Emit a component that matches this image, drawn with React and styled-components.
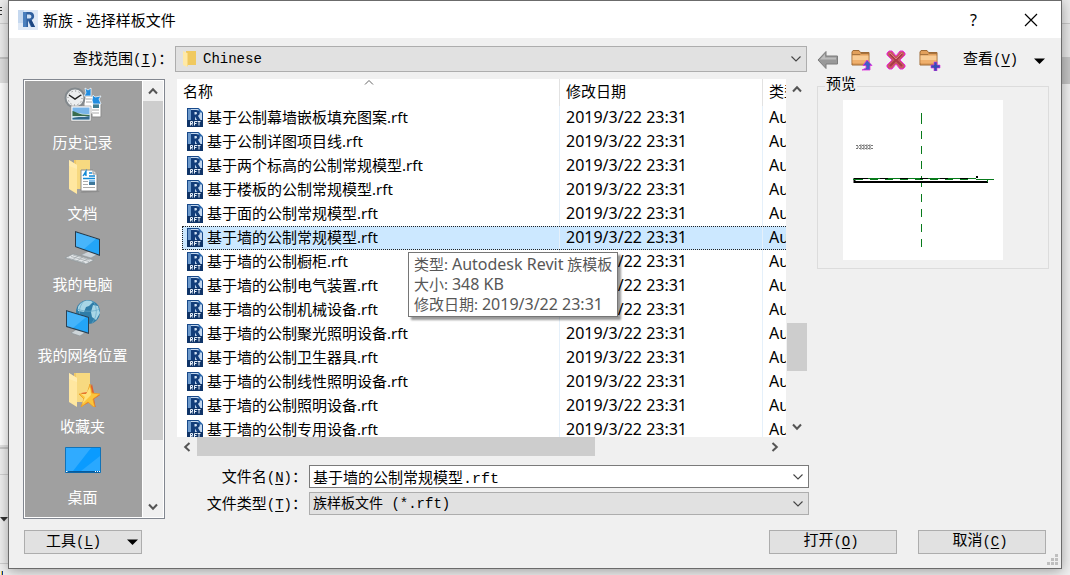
import React, { useState } from 'react';
import styled, { createGlobalStyle } from 'styled-components';

const uiFont = '"Noto Sans", "Noto Sans CJK SC", sans-serif';
const formFont = '"Liberation Mono", "Noto Sans CJK SC", monospace';

const GlobalStyle = createGlobalStyle`
  * {
    box-sizing: border-box;
  }

  body {
    margin: 0;
    color: #000;
    font: 15px/20px ${uiFont};
  }

  button, input, select {
    margin: 0;
    padding: 0;
    color: inherit;
    border-radius: 0;
  }

  svg {
    display: block;
    flex: none;
  }
`;

const Desktop = styled.div`
  display: grid;
  grid-template-columns: 8px minmax(0, 1fr) 8px;
  min-height: 100vh;
  background: #f0f0f0;
  overflow: hidden;
`;

const LeftEdge = styled.div`
  background: linear-gradient(
    #ededed 23px, #cfcfcf 23px 24px, #ededed 24px 57px, #c4c4c4 57px 59px,
    #e0e0e0 59px 83px, #ffffff 83px 445px, #e4e4e4 445px 447px, #c8c8c8 447px 449px,
    #f0f0f0 449px 474px, #d2d2d2 474px 475px, #f0f0f0 475px 563px, #cfcfcf 563px 564px, #f0f0f0 564px
  );
`;

const RightEdge = styled.div`
  background: linear-gradient(
    #ebebeb 23px, #c8c8c8 23px 24px, #e6e6e6 24px 57px, #c4c4c4 57px 84px, #f0f0f0 84px
  );
`;

const Dialog = styled.main`
  position: relative;
  align-self: start;
  background: #f0f0f0;
  border: 1px solid #6b6b6b;
  box-shadow: 0 2px 12px rgba(0, 0, 0, 0.35);
`;

const TitleBar = styled.header`
  display: flex;
  align-items: center;
  gap: 5px;
  height: 37px;
  padding-left: 9px;
  background: #fff;
`;

const Title = styled.h1`
  flex: 1;
  margin: 0;
  font-size: 15px;
  font-weight: 400;
`;

const TitleActions = styled.div`
  display: flex;
  padding-right: 2px;
`;

const TitleButton = styled.button`
  display: flex;
  align-items: center;
  justify-content: center;
  width: 57px;
  height: 36px;
  border: 0;
  background: none;
  font: 16px/20px ${uiFont};
`;

const Body = styled.div`
  display: grid;
  grid-template-columns: 142px minmax(0, 1fr) 232px;
  column-gap: 10px;
  row-gap: 7px;
  padding: 8px 12px 0 14px;
`;

const FormLabel = styled.label`
  align-self: center;
  padding-top: 3px;
  padding-left: ${props => props.$indent ? '50px' : 0};
  font: 15px/20px ${formFont};
  white-space: nowrap;
`;

const Key = styled.span`
  font-size: 14px;

  u {
    text-underline-offset: 2px;
  }
`;

const Combo = styled.div`
  display: flex;
  align-items: center;
  height: ${props => props.$tall ? '26px' : '23px'};
  padding-right: 4px;
  border: 1px solid ${props => props.$editable ? '#7a7a7a' : '#adadad'};
  background: ${props => props.$editable ? '#fff' : '#e1e1e1'};

  input, select {
    flex: 1;
    min-width: 0;
    height: 100%;
    padding-left: 3px;
    border: 0;
    outline: 0;
    appearance: none;
    background: transparent;
    font: ${props => props.$editable ? '15px' : '14px'}/20px ${formFont};
  }
`;

const FolderSlot = styled.span`
  padding: 0 4px 0 7px;
`;

const Tools = styled.div`
  display: flex;
  align-items: center;
  padding-top: 3px;
`;

const ToolButton = styled.button`
  display: flex;
  justify-content: center;
  width: 34px;
  height: 22px;
  border: 0;
  background: none;

  &:first-child {
    justify-content: flex-start;
    width: 28px;
  }
`;

const ViewButton = styled.button`
  display: flex;
  flex: 1;
  align-items: center;
  justify-content: space-between;
  padding: 0 4px 0 16px;
  border: 0;
  background: none;
  font: 15px/22px ${formFont};
`;

const Places = styled.div`
  display: flex;
  border: 1px solid #828790;
  padding: 1px;
  background: #fff;
`;

const PlaceList = styled.nav`
  flex: 1;
  padding: 6px 2px 0 0;
  background: #a0a0a0;
`;

const Place = styled.a`
  display: flex;
  flex-direction: column;
  align-items: center;
  height: 71px;
  gap: 12px;
  color: #fff;
  font: 15px/20px ${formFont};
  text-decoration: none;
`;

const VScroll = styled.div`
  display: flex;
  flex-direction: column;
  flex: none;
  width: 20px;
  margin-left: 1px;
  background: #f0f0f0;
`;

const ScrollButton = styled.button`
  display: flex;
  align-items: center;
  justify-content: center;
  flex: none;
  width: 20px;
  height: 20px;
  border: 0;
  background: none;
`;

const Track = styled.div`
  display: flex;
  flex-direction: ${props => props.$horizontal ? 'row' : 'column'};
  flex: 1;
`;

const Spacer = styled.div`
  flex: ${props => props.$grow};
`;

const Thumb = styled.div`
  flex: ${props => props.$grow};
  background: #cdcdcd;
`;

const Browser = styled.section`
  min-width: 0;
`;

const ListRow = styled.div`
  display: flex;
  height: 358px;
  padding-left: 2px;
`;

const Viewport = styled.div`
  position: relative;
  flex: 1;
  min-width: 0;
  padding-left: 5px;
  overflow: hidden;
  background: #fff;
`;

const FileTable = styled.table`
  width: 720px;
  border-collapse: separate;
  border-spacing: 0;
  table-layout: fixed;

  th, td {
    height: 24px;
    padding: 0 0 2px 6px;
    border-left: 1px solid #e5f0fa;
    font-weight: 400;
    text-align: left;
    white-space: nowrap;
  }

  th {
    height: 27px;
    padding-bottom: 3px;
    border-left-color: #e2e2e2;
  }

  th:first-child, td:first-child {
    border-left: 0;
  }

  th:first-child {
    padding-left: 1px;
  }

  td:first-child {
    padding-left: 5px;
  }
`;

const NameCol = styled.col`
  width: 377px;
`;

const DateCol = styled.col`
  width: 203px;
`;

const FileRow = styled.tr`
  background: ${props => props.$selected ? '#cce8ff' : 'transparent'};
  outline: ${props => props.$selected ? '1px dotted #222' : 'none'};
  outline-offset: -1px;
`;

const FileName = styled.span`
  display: flex;
  align-items: center;
  gap: 4px;
`;

const Latin = styled.span`
  font-size: 16px;
`;

const SortMark = styled.span`
  position: absolute;
  top: 0;
  left: 187px;
`;

const Tooltip = styled.div`
  position: absolute;
  top: 173px;
  left: 231px;
  padding: 1px 5px 2px;
  border: 1px solid #767676;
  background: #fff;
  box-shadow: 3px 3px 2px rgba(0, 0, 0, 0.4);
  color: #575757;
  white-space: nowrap;
`;

const HScroll = styled.div`
  display: flex;
  height: 19px;
  padding: 0 22px 0 2px;
`;

const Fields = styled.div`
  display: grid;
  grid-template-columns: 132px minmax(0, 1fr);
  gap: 3px 2px;
  margin: 9px -2px 3px 0;

  label {
    text-align: right;
  }
`;

const Preview = styled.fieldset`
  align-self: start;
  min-width: 0;
  margin: 0;
  padding: 7px 25px 8px;
  border: 1px solid #dcdcdc;
  font: 15px/14px ${formFont};

  legend {
    margin-left: -18px;
    padding: 0 1px;
  }

  svg {
    width: 160px;
    background: #fff;
  }
`;

const Footer = styled.footer`
  display: flex;
  gap: 21px;
  padding: 11px 15px 14px;
`;

const PushButton = styled.button`
  display: flex;
  align-items: center;
  justify-content: ${props => props.$menu ? 'space-between' : 'center'};
  width: ${props => props.$menu ? '118px' : '128px'};
  height: 24px;
  padding: ${props => props.$menu ? '0 3px 0 21px' : '0 4px 0 0'};
  margin-right: ${props => props.$menu ? 'auto' : 0};
  border: 1px solid #adadad;
  background: #e1e1e1;
  font: 15px/20px ${formFont};
`;

const Grip = styled.svg`
  position: absolute;
  right: 2px;
  bottom: 2px;
`;

const Chevron = ({ turn = 0, thin }) => (
  <svg width="12" height="12" viewBox="0 0 12 12">
    <path
      d={thin ? 'M1.5 3.5 6 8 10.5 3.5' : 'M2 3.5 6 7.8 10 3.5'}
      fill="none"
      stroke={thin ? '#444' : '#555'}
      strokeWidth={thin ? 1.1 : 2}
      transform={`rotate(${turn} 6 6)`}
    />
  </svg>
);

const Triangle = () => (
  <svg width="11" height="6" viewBox="0 0 11 6"><path d="M0 .5h11L5.5 6z" /></svg>
);

// bits of the main window's ribbon and palettes that stick out beside the dialog
const EdgeMarks = () => (
  <svg width="8" height="575" viewBox="0 0 8 575">
    <path d="M0 7.500h2M0 10.500h2M0 14.500h2" stroke="#333" />
    <path d="M0 517h8l-4 4.500z" fill="#333" />
    <path d="M1 571h1v4H1z" fill="#e8c34a" />
    <path d="M2 571h1v4H2z" fill="#0b3d91" />
  </svg>
);

const AppIcon = () => (
  <svg width="20" height="20" viewBox="0 0 20 20">
    <rect width="20" height="20" fill="#dfe9f6" />
    <path d="M0 0h6v13H0z" fill="#c5d8ef" />
    <path d="M5 2h7c5 0 5.500 7 1.500 8l3.500 7h-4l-3-6.500V17H5z" fill="#2f5f9e" />
    <path d="M9 4.500h2.500c2.500 0 2.500 4 0 4H9z" fill="#cfe0f3" />
    <path d="M5 2h3.500v15H5z" fill="#4a7fbd" />
    <path d="m11 10.500 2.500-.5 3.500 7h-3z" fill="#1d4680" />
  </svg>
);

const RftIcon = () => (
  <svg width="16" height="19" viewBox="0 0 16 19">
    <path d="M0 0h11.500L16 4.500V19H0z" fill="#17498a" />
    <path d="M1 1h10.500L15 4.500V12H1z" fill="#c3d7ee" />
    <path d="M1 1h3v11H1z" fill="#6f9bcc" />
    <path d="M11.500 0v4.500H16z" fill="#2c6ab0" />
    <path d="M4 2h5c4.500 0 4.800 5 1.900 5.800L13.500 12H10L8 8.500V12H4z" fill="#123d7a" />
    <path d="M7.500 4H9c1.300 0 1.300 2.400 0 2.400H7.500z" fill="#d3e3f4" />
    <path d="M0 12h16v7H0z" fill="#0f3468" />
    <path d="M3.500 17.500v-4h2v2h-2m1 0 1 2M7.500 17.500v-4H10m-2.500 2h2M10.500 13.500h3m-1.500 0v4" fill="none" stroke="#e8f0fa" />
  </svg>
);

const SmallFolder = () => (
  <svg width="13" height="18" viewBox="0 0 13 18">
    <path d="M3 1h10v14H3z" fill="#f0c95f" />
    <path d="m0 1 4 2v14l-4-2z" fill="#ffe9a6" />
    <path d="M4 3v14l1-2V3z" fill="#f8d983" />
  </svg>
);

const HistoryIcon = () => (
  <svg width="38" height="36" viewBox="0 0 38 36">
    <path d="M20 9h9l8 8v13h-9v-3h-8z" fill="#fff" stroke="#8b8b8b" />
    <path d="M22 12h6m-6 3h6m0 8h7m-7 3h7" stroke="#aaa" />
    <path d="M29 17h6v4h-6z" fill="#3f7d92" />
    <circle cx="11" cy="11" r="9.500" fill="#eceeef" stroke="#83898d" strokeWidth="2" />
    <circle cx="11" cy="11" r="7" fill="none" stroke="#777" strokeDasharray="1 2.660" />
    <path d="m5 8 6 4 6-4" fill="none" stroke="#222" strokeWidth="1.500" />
    <path d="m21 1 3 2 3-2v8h-7l2-3zM29 8l2 2 6-1-2 3 2 5h-8l-1-4z" fill="#218de0" stroke="#fff" strokeWidth=".7" />
    <path d="M7 19h20v15H7z" fill="#fff" stroke="#8a8a8a" strokeWidth=".6" />
    <path d="M8.500 20.500h17v12h-17z" fill="#78b5e9" />
    <path d="M8.500 25c5 0 5 2 17 2v5.500h-17z" fill="#cfe5e8" />
    <path d="M8.500 24c3 0 5 4 17 4v1h-17z" fill="#3a6d4e" />
    <path d="M8.500 31c7-2 9 0 17-2v3.500h-17z" fill="#31688d" />
  </svg>
);

const FolderBase = () => (
  <>
    <path d="M9 2h16v29H9z" fill="#efc868" />
    <path d="M11 2h14v29H11z" fill="#f7d980" />
    <path d="m4 2 8 5v29l-8-5z" fill="#ffe7a0" />
    <path d="m4 2 8 5v4L4 8z" fill="#fff0bd" opacity=".6" />
  </>
);

const DocumentsIcon = () => (
  <svg width="36" height="36" viewBox="0 0 36 36">
    <path d="m15 35 20-1-8-6z" fill="#777" opacity=".4" />
    <FolderBase />
    <path d="M16 12h12l4 4v17H16z" fill="#fff" stroke="#8a8a8a" />
    <path d="M28 12v4h4" fill="#ddd" stroke="#999" />
    <path d="m18 18 3-5v5m-2-1.500h2M24 15h3m-3 3h6M18 20.500h12" fill="none" stroke="#168bd6" strokeWidth="1.300" />
    <path d="M18 23.500h5m-5 3h5m-5 3h12" stroke="#aaa" />
    <path d="M24 22h6v5h-6z" fill="#3e789b" />
    <path d="M24 22h6v2h-6z" fill="#8ac2ec" />
  </svg>
);

const ComputerIcon = () => (
  <svg width="38" height="36" viewBox="0 0 38 36">
    <path d="m17 26 8-4 9 3-7 4z" fill="#ccd3d8" stroke="#8f989e" strokeWidth=".6" />
    <path d="m11 2 25 8v17l-25-9z" fill="#293a48" />
    <path d="m12 3.500 23 7.300v14.700l-23-8.200z" fill="#23a5f8" />
    <path d="m12 3.500 20 6.300L20 20l-8-2.700z" fill="#68c3fb" opacity=".55" />
    <path d="m1 29 8-4 21 6-8 4z" fill="#e3e6e8" stroke="#8b9398" strokeWidth=".7" />
    <path d="m4 29 17 5M7 27.500l18 5M9 26l17 5M8 31l6-4m-1 5 6-4m-1 5 6-3.500" stroke="#969da1" strokeWidth=".6" />
  </svg>
);

const NetworkIcon = () => (
  <svg width="38" height="36" viewBox="0 0 38 36">
    <circle cx="24" cy="12" r="12" fill="#2f7da8" />
    <path d="M14 7c3-6 10-8 15-5l-4 4-3 1-2 5-6-1zM29 5l5 1 2 7-4 7-4-3-1-5z" fill="#a8d6e6" />
    <path d="M19 2c-4 5-5 12-1 20M29 1c5 7 4 16-1 22M13 9c8 3 16 3 23 0" fill="none" stroke="#67a9c8" strokeWidth=".7" />
    <path d="m7 33 6-4 9 3-6 4z" fill="#ced5d9" stroke="#8b9499" strokeWidth=".6" />
    <path d="m2 10 23 7v17L2 27z" fill="#2c4253" />
    <path d="m3 11.500 21 6.300v14.700L3 26z" fill="#23a5f8" />
    <path d="m3 11.500 19 5.700L9 28l-6-2z" fill="#68c3fb" opacity=".5" />
  </svg>
);

const FavoritesIcon = () => (
  <svg width="36" height="36" viewBox="0 0 36 36">
    <FolderBase />
    <path d="m27 13 2 9 6 2-6 4 2 10-6-7-8 4 4-8-5-5 7-1z" fill="#e25d2b" />
    <path d="m25 13 2 9 8 1-7 5 2 9-7-6-7 5 3-8-5-5h8z" fill="#fbc53c" stroke="#ec9c24" strokeWidth=".8" />
    <path d="m25 16 1 8-9 9 3-7-4-3h5z" fill="#ffe17a" />
  </svg>
);

const DesktopIcon = () => (
  <svg width="36" height="36" viewBox="0 0 36 36">
    <path d="M.5 5.500h35v25H.5z" fill="#0a9bff" stroke="#1173b8" />
    <path d="M1 6h25L8 29H1z" fill="#45b4ff" opacity=".65" />
    <path d="M35 14v15H16z" fill="#4fb7ff" opacity=".45" />
    <path d="M1 29h34v1.500H1z" fill="#075a9b" />
    <path d="M1 29.500h1.500M30 29.500h1m1 0h1m1 0h1" stroke="#fff" />
  </svg>
);

const BackIcon = () => (
  <svg width="22" height="20" viewBox="0 0 22 20">
    <path d="M1 10 9 1.500v4.500h11.500v8H9v4.500z" fill="#999" stroke="#7d7d7d" />
    <path d="M3 9.500 8 4v3.500h11v2z" fill="#bdbdbd" />
  </svg>
);

const ToolFolder = ({ children }) => (
  <svg width="22" height="21" viewBox="0 0 22 21">
    <path d="M1 15V2l1-1.500h6L9.500 2.500H18V15z" fill="#e2a05c" stroke="#9f6a35" />
    <path d="M1.500 5.500h16V10h-16z" fill="#f8cb94" />
    <path d="M1.500 10h16v3h-16z" fill="#f0b06c" />
    <path d="M1 4.500h8l1-1h8" fill="none" stroke="#a8743e" />
    {children}
  </svg>
);

const DeleteIcon = () => (
  <svg width="20" height="20" viewBox="0 0 20 20">
    <path
      d="m1 3 2-2h3l4 5 4-5h3l2 2v2l-5 5 5 5v2l-2 2h-3l-4-5-4 5H3l-2-2v-2l5-5-5-5z"
      fill="#c95a62"
      stroke="#f026dd"
    />
    <path d="m4 4 12 12M16 4 4 16" stroke="#a83a48" strokeWidth="2" />
    <path d="m4 3 6 6 6-6" fill="none" stroke="#dc7a80" />
  </svg>
);

const PreviewDrawing = () => (
  <svg viewBox="0 0 160 160" role="img" aria-label="预览">
    <path d="M78.500 13v134" stroke="#087a1b" strokeDasharray="11 7 8 7 8 7 8 7" />
    <path d="M11 78h134v5H11z" fill="#fff" />
    <path d="M11 78.500h120" stroke="#000" strokeDasharray="14 6" />
    <path d="M11 82h134M11.500 78v5" stroke="#000" strokeWidth="2" />
    <path d="M12 79.500h116" stroke="#087a1b" strokeDasharray="8 7" />
    <path d="M10 79.500h3m12-1h12m8 0h12m8 0h12m8 0h12m8 0h12m8 0h8m0 1h18M144.500 79v3" fill="none" stroke="#087a1b" />
    <path d="M133 76h2v2h-2z" />
    <path d="M13 45.500h17M13 48.500h17M14 47h15" stroke="#777" strokeDasharray="2 1" />
    <path d="M18 44v6m3-6v6m3-6v6m3-6v6" stroke="#999" />
  </svg>
);

const Mnemonic = ({ letter }) => <Key>(<u>{letter}</u>)</Key>;

const places = [
  ['历史记录', HistoryIcon],
  ['文档', DocumentsIcon],
  ['我的电脑', ComputerIcon],
  ['我的网络位置', NetworkIcon],
  ['收藏夹', FavoritesIcon],
  ['桌面', DesktopIcon],
];

const files = [
  '基于公制幕墙嵌板填充图案.rft',
  '基于公制详图项目线.rft',
  '基于两个标高的公制常规模型.rft',
  '基于楼板的公制常规模型.rft',
  '基于面的公制常规模型.rft',
  '基于墙的公制常规模型.rft',
  '基于墙的公制橱柜.rft',
  '基于墙的公制电气装置.rft',
  '基于墙的公制机械设备.rft',
  '基于墙的公制聚光照明设备.rft',
  '基于墙的公制卫生器具.rft',
  '基于墙的公制线性照明设备.rft',
  '基于墙的公制照明设备.rft',
  '基于墙的公制专用设备.rft',
];

const App = () => {
  const [selected, setSelected] = useState('基于墙的公制常规模型.rft');

  return (
    <>
      <GlobalStyle />
      <Desktop>
        <LeftEdge><EdgeMarks /></LeftEdge>
        <Dialog>
          <TitleBar>
            <AppIcon />
            <Title>新族 - 选择样板文件</Title>
            <TitleActions>
              <TitleButton aria-label="帮助">?</TitleButton>
              <TitleButton aria-label="关闭">
                <svg width="14" height="14" viewBox="0 0 14 14">
                  <path d="m1 1 12 12M13 1 1 13" stroke="#000" strokeWidth="1.200" />
                </svg>
              </TitleButton>
            </TitleActions>
          </TitleBar>

          <Body>
            <FormLabel htmlFor="look-in" $indent>查找范围<Mnemonic letter="I" />：</FormLabel>
            <Combo $tall>
              <FolderSlot><SmallFolder /></FolderSlot>
              <select id="look-in">
                <option>Chinese</option>
              </select>
              <Chevron thin />
            </Combo>
            <Tools>
              <ToolButton aria-label="后退"><BackIcon /></ToolButton>
              <ToolButton aria-label="向上一级">
                <ToolFolder>
                  <path d="m16 10 5 5.500h-2V20h-8l4-2v-2.500h-3z" fill="#3f5fc4" stroke="#e32be0" strokeWidth=".8" />
                </ToolFolder>
              </ToolButton>
              <ToolButton aria-label="删除"><DeleteIcon /></ToolButton>
              <ToolButton aria-label="新建文件夹">
                <ToolFolder>
                  <path d="M15 12h3v3h3v3h-3v3h-3v-3h-3v-3h3z" fill="#3450b4" stroke="#e32be0" strokeWidth=".6" />
                </ToolFolder>
              </ToolButton>
              <ViewButton>
                <span>查看<Mnemonic letter="V" /></span>
                <Triangle />
              </ViewButton>
            </Tools>

            <Places>
              <PlaceList>
                {places.map(([name, Icon]) => (
                  <Place key={name} href="#">
                    <Icon />
                    {name}
                  </Place>
                ))}
              </PlaceList>
              <VScroll>
                <ScrollButton aria-label="向上滚动"><Chevron turn={180} /></ScrollButton>
                <Track>
                  <Thumb $grow={337} />
                  <Spacer $grow={57} />
                </Track>
                <ScrollButton aria-label="向下滚动"><Chevron /></ScrollButton>
              </VScroll>
            </Places>

            <Browser>
              <ListRow>
                <Viewport>
                  <FileTable>
                    <colgroup>
                      <NameCol />
                      <DateCol />
                      <col />
                    </colgroup>
                    <thead>
                      <tr>
                        <th>名称</th>
                        <th>修改日期</th>
                        <th>类型</th>
                      </tr>
                    </thead>
                    <tbody>
                      {files.map(name => (
                        <FileRow key={name} $selected={name === selected} onClick={() => setSelected(name)}>
                          <td><FileName><RftIcon />{name}</FileName></td>
                          <td><Latin>2019/3/22 23:31</Latin></td>
                          <td><Latin>Autodesk Revit</Latin> 族模板</td>
                        </FileRow>
                      ))}
                    </tbody>
                  </FileTable>
                  <SortMark>
                    <svg width="10" height="8" viewBox="0 0 10 8">
                      <path d="M1 5.500 5 1.500l4 4" fill="none" stroke="#666" />
                    </svg>
                  </SortMark>
                  <Tooltip role="tooltip">
                    类型: <Latin>Autodesk Revit</Latin> 族模板<br />
                    大小: <Latin>348 KB</Latin><br />
                    修改日期: <Latin>2019/3/22 23:31</Latin>
                  </Tooltip>
                </Viewport>
                <VScroll>
                  <ScrollButton aria-label="列表向上滚动"><Chevron turn={180} /></ScrollButton>
                  <Track>
                    <Spacer $grow={224} />
                    <Thumb $grow={48} />
                    <Spacer $grow={46} />
                  </Track>
                  <ScrollButton aria-label="列表向下滚动"><Chevron /></ScrollButton>
                </VScroll>
              </ListRow>
              <HScroll>
                <ScrollButton aria-label="列表向左滚动"><Chevron turn={90} /></ScrollButton>
                <Track $horizontal>
                  <Thumb $grow={398} />
                  <Spacer $grow={170} />
                </Track>
                <ScrollButton aria-label="列表向右滚动"><Chevron turn={-90} /></ScrollButton>
              </HScroll>
              <Fields>
                <FormLabel htmlFor="file-name">文件名<Mnemonic letter="N" />：</FormLabel>
                <Combo $editable>
                  <input id="file-name" value={selected} onChange={e => setSelected(e.target.value)} />
                  <Chevron thin />
                </Combo>
                <FormLabel htmlFor="file-type">文件类型<Mnemonic letter="T" />：</FormLabel>
                <Combo>
                  <select id="file-type">
                    <option>族样板文件 (*.rft)</option>
                  </select>
                  <Chevron thin />
                </Combo>
              </Fields>
            </Browser>

            <Preview>
              <legend>预览</legend>
              <PreviewDrawing />
            </Preview>
          </Body>

          <Footer>
            <PushButton $menu>
              <span>工具<Mnemonic letter="L" /></span>
              <Triangle />
            </PushButton>
            <PushButton>打开<Mnemonic letter="O" /></PushButton>
            <PushButton>取消<Mnemonic letter="C" /></PushButton>
          </Footer>
          <Grip width="12" height="12" viewBox="0 0 12 12">
            <path d="M8 0h3v3H8zM4 4h3v3H4zM8 4h3v3H8zM0 8h3v3H0zM4 8h3v3H4zM8 8h3v3H8z" fill="#bfbfbf" />
          </Grip>
        </Dialog>
        <RightEdge />
      </Desktop>
    </>
  );
};

export default App;
